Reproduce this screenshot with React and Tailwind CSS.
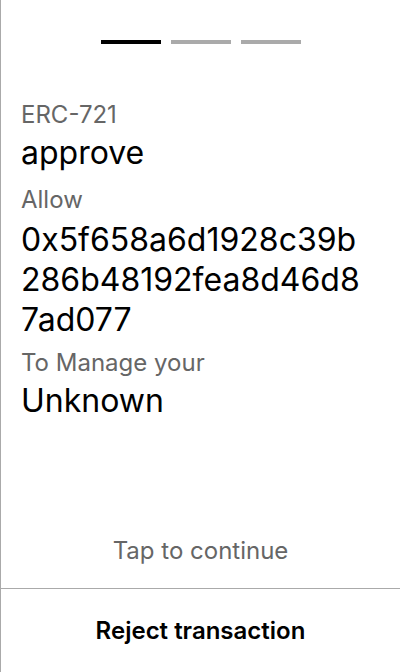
import React from 'react';

const steps = [true, false, false];

export default function App() {
  return (
    <div
      className="h-[672px] w-[400px] flex flex-col bg-white border-l border-[#aaaaaa] text-black"
      style={{ fontFamily: 'Inter, "Noto Sans", sans-serif' }}
    >
      <div className="flex justify-center gap-[10px] pt-10">
        {steps.map((active, i) => (
          <div key={i} className={`h-1 w-[60px] ${active ? 'bg-black' : 'bg-[#aaaaaa]'}`} />
        ))}
      </div>

      <div className="flex-1 pl-5 pr-5 pt-[57px]">
        <div className="text-[24px] leading-[28px] text-[#666666]">ERC-721</div>
        <div className="text-[32px] leading-[40px] mt-[4px]">approve</div>

        <div className="text-[24px] leading-[28px] text-[#666666] mt-[13px]">Allow</div>
        <div className="text-[32px] leading-[40px] mt-[6px] w-[350px] break-all">
          0x5f658a6d1928c39b286b48192fea8d46d87ad077
        </div>

        <div className="text-[24px] leading-[28px] text-[#666666] mt-[9px]">To Manage your</div>
        <div className="text-[32px] leading-[40px] mt-[4px]">Unknown</div>
      </div>

      <div className="text-center text-[24px] leading-[28px] text-[#666666] pb-[23px]">
        Tap to continue
      </div>
      <div className="border-t border-[#aaaaaa] h-[84px] flex items-center justify-center">
        <button className="text-[24px] leading-[28px] font-semibold">Reject transaction</button>
      </div>
    </div>
  );
}
